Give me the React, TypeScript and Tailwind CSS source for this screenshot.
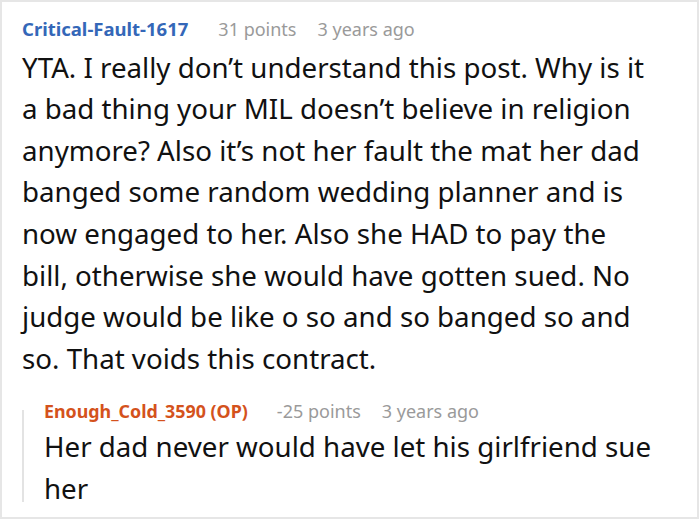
import React from "react";

export default function App() {
  return (
    <div className="w-[699px] h-[519px] border-2 border-[#e6e6e6] bg-white pl-[20px] pt-[13px] overflow-hidden font-['Noto_Sans','Open_Sans',sans-serif]">
      <div className="flex items-baseline text-[18px] leading-[28px]">
        <span className="font-bold text-[18.5px] text-[#3467b8]">Critical-Fault-1617</span>
        <span className="ml-[30px] text-[#9a9a9a]">31 points</span>
        <span className="ml-[21px] text-[#9a9a9a]">3 years ago</span>
      </div>
      <p className="mt-[3.6px] w-[632px] text-[27.7px] leading-[41.6px] text-[#111111]">
        YTA. I really don’t understand this post. Why is it a bad thing your MIL doesn’t believe in
        religion anymore? Also it’s not her fault the mat her dad banged some random wedding planner
        and is now engaged to her. Also she HAD to pay the bill, otherwise she would have gotten
        sued. No judge would be like o so and so banged so and so. That voids this contract.
      </p>
      <div className="mt-[17.5px] flex">
        <div className="w-[2px] shrink-0 bg-[#e3e3e3] mt-[13px] mb-[8px]" />
        <div className="ml-[20px] w-[640px]">
          <div className="flex items-baseline text-[18px] leading-[28px]">
            <span className="font-bold text-[17.85px] text-[#d4521c]">Enough_Cold_3590 (OP)</span>
            <span className="ml-[29px] text-[#9a9a9a]">-25 points</span>
            <span className="ml-[21px] text-[#9a9a9a]">3 years ago</span>
          </div>
          <p className="mt-[1.6px] text-[27.7px] leading-[41.6px] text-[#111111]">
            Her dad never would have let his girlfriend sue her
          </p>
        </div>
      </div>
    </div>
  );
}
